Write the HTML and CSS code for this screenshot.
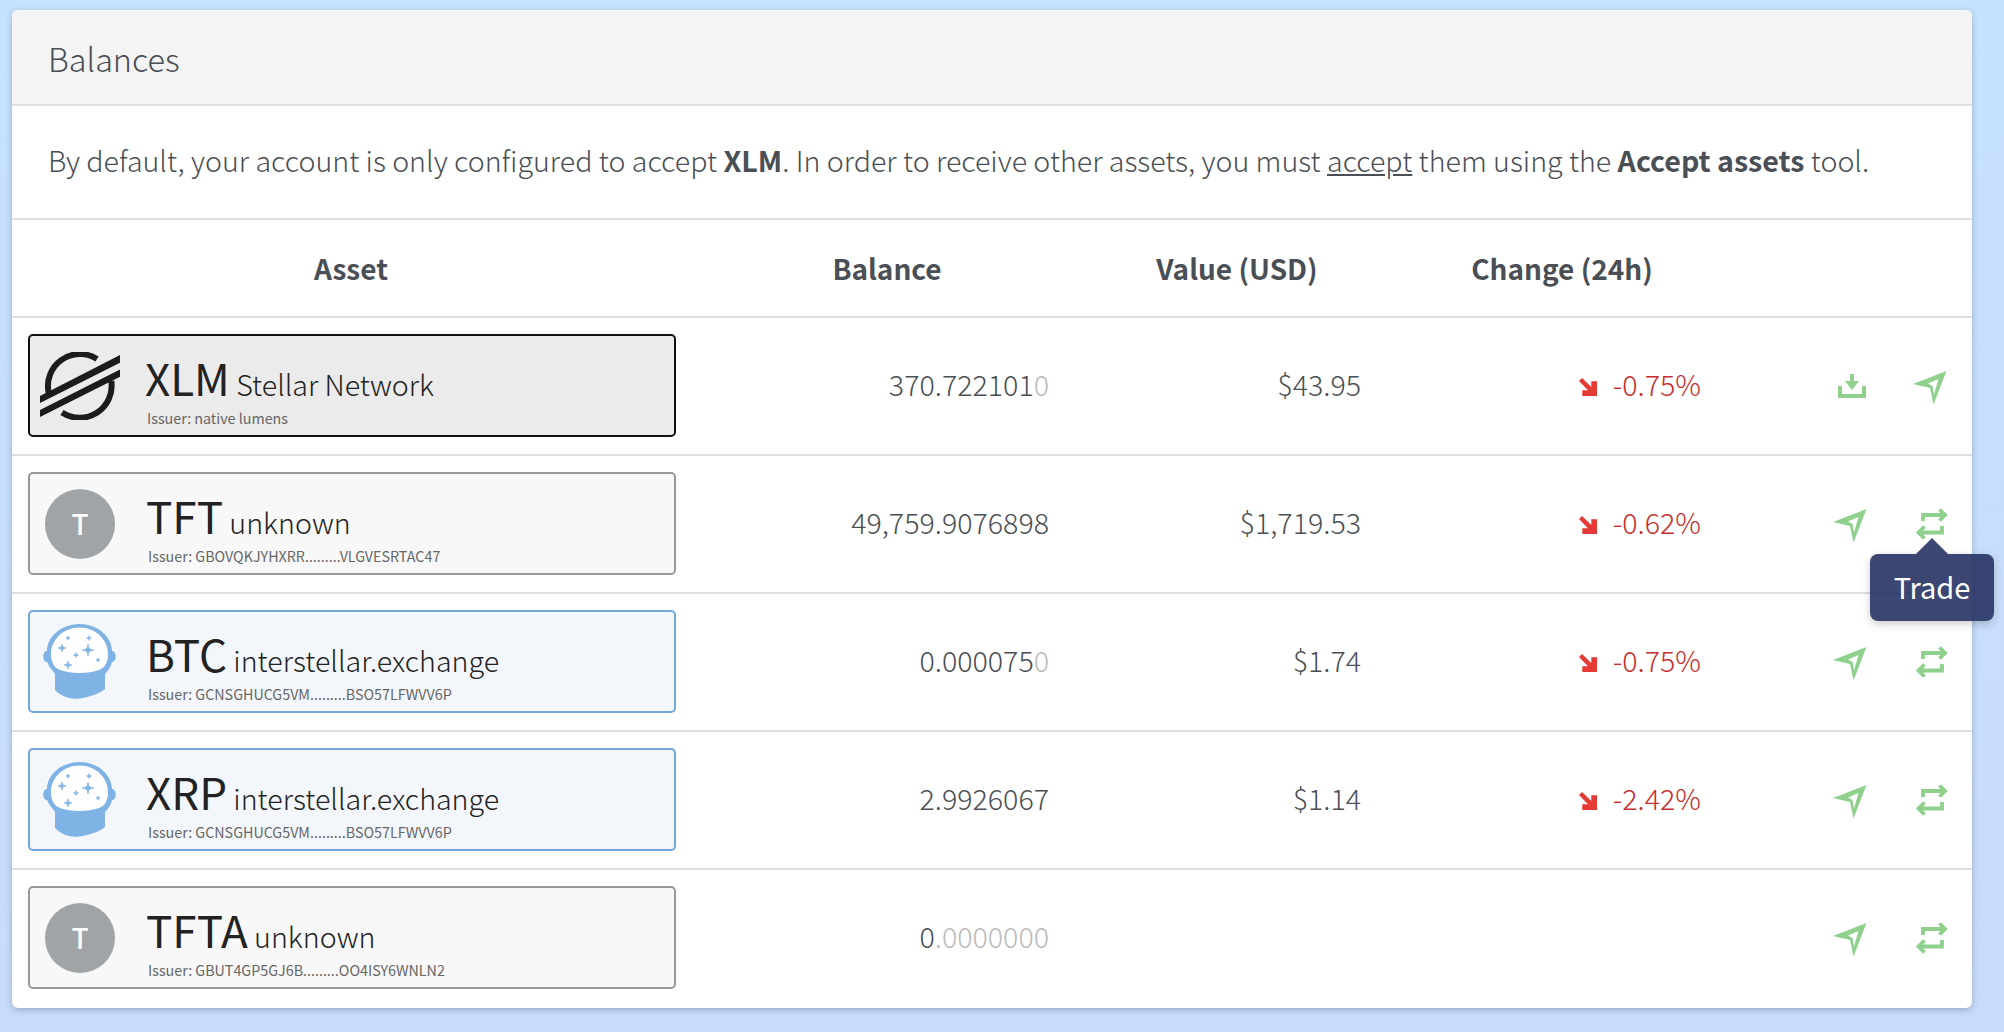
FILE: index.html
```html
<!DOCTYPE html>
<html lang="en">
<head>
    <meta charset="UTF-8">
    <title>Balances</title>
    <link rel="stylesheet" href="styles.css">
</head>
<body>
<svg class="defs" width="0" height="0">
    <symbol id="i-send" viewBox="0 0 34 34">
        <path fill-rule="evenodd" d="M33.500 0L20.500 33.500L17 17L0 13ZM25.500 8L15 12.500L19.500 15L21 23.500Z"/>
    </symbol>
    <symbol id="i-trade" viewBox="0 0 32 32">
        <path class="line" d="M7 13V7H28M23.500 1.500L29 7L23.500 12.500M26 18V24.500H4M8.500 18.500L2.500 24.500L8.500 30.500"/>
    </symbol>
    <symbol id="i-down" viewBox="0 0 28 24">
        <path d="M12 0h4v7h5l-7 9l-7-9h5zM0 12h4v8h20v-8h4v12H0z"/>
    </symbol>
    <symbol id="i-head" viewBox="0 0 73 75">
        <path fill="#7fb2e5" d="M36.500 0C17 0 4 14 4 27C-1 27 -1 38 4 38C6 43 10 47 12 50V66C20 74 30 76 40 74C48 72 56 70 62 65V50C65 47 68 43 69 38C74 38 74 27 69 27C69 14 56 0 36.500 0Z"/>
        <path fill="#fff" d="M36.500 3.500C20 3.500 8 16 8 30C8 38 11 44 17 46C28 50 45 50 56 46C62 44 65 38 65 30C65 16 53 3.500 36.500 3.500Z"/>
        <g fill="#7fb2e5" stroke="#7fb2e5" stroke-width="0.700">
            <path d="M25 12Q25 14 27 14Q25 14 25 16Q25 14 23 14Q25 14 25 12Z"/>
            <path d="M46 11.500Q46 14 48.500 14Q46 14 46 16.500Q46 14 43.500 14Q46 14 46 11.500Z"/>
            <path d="M19 20Q19 24 23 24Q19 24 19 28Q19 24 15 24Q19 24 19 20Z"/>
            <path d="M45 20Q45 26 51 26Q45 26 45 32Q45 26 39 26Q45 26 45 20Z"/>
            <path d="M33 28.500Q33 31 35.500 31Q33 31 33 33.500Q33 31 30.500 31Q33 31 33 28.500Z"/>
            <path d="M55 34Q55 36 57 36Q55 36 55 38Q55 36 53 36Q55 36 55 34Z"/>
            <path d="M25 37Q25 41 29 41Q25 41 25 45Q25 41 21 41Q25 41 25 37Z"/>
        </g>
    </symbol>
</svg>

<div class="card">
    <div class="card-title">Balances</div>
    <p class="intro">By default, your account is only configured to accept <b>XLM</b>. In order to receive other assets, you must <u>accept</u> them using the <b>Accept assets</b> tool.</p>

    <div class="row head">
        <div>Asset</div>
        <div>Balance</div>
        <div>Value (USD)</div>
        <div>Change (24h)</div>
        <div></div>
    </div>

    <div class="row">
        <div class="asset native">
            <svg class="logo" viewBox="0 0 80 68">
                <path class="ring" d="M8.700 41A32 32 0 0 1 57 7M71.300 29A32 32 0 0 1 22 60.500"/>
                <path d="M0 44L80 3V10.700L0 51ZM0 58L80 17.500V24.700L0 65Z"/>
            </svg>
            <div class="asset-text">
                <div class="asset-name"><span class="code">XLM</span> Stellar Network</div>
                <div class="issuer">Issuer: native lumens</div>
            </div>
        </div>
        <div class="num bal">370.722101<i>0</i></div>
        <div class="num val">$43.95</div>
        <div class="num chg"><svg class="down" viewBox="0 0 18 18"><path d="M0 3L3 0L12.300 9V3.300H18V18H3.300V12.300H9Z"/></svg>-0.75%</div>
        <div class="acts">
            <span class="act"><svg class="i-down"><use href="#i-down"/></svg></span>
            <span class="act"><svg class="i-send"><use href="#i-send"/></svg></span>
        </div>
    </div>

    <div class="row">
        <div class="asset unknown">
            <div class="letter">T</div>
            <div class="asset-text">
                <div class="asset-name"><span class="code">TFT</span> unknown</div>
                <div class="issuer">Issuer: GBOVQKJYHXRR.........VLGVESRTAC47</div>
            </div>
        </div>
        <div class="num bal">49,759.9076898</div>
        <div class="num val">$1,719.53</div>
        <div class="num chg"><svg class="down" viewBox="0 0 18 18"><path d="M0 3L3 0L12.300 9V3.300H18V18H3.300V12.300H9Z"/></svg>-0.62%</div>
        <div class="acts">
            <span class="act"><svg class="i-send"><use href="#i-send"/></svg></span>
            <span class="act">
                <svg class="i-trade"><use href="#i-trade"/></svg>
                <span class="tip">Trade</span>
            </span>
        </div>
    </div>

    <div class="row">
        <div class="asset verified">
            <svg class="head-logo"><use href="#i-head"/></svg>
            <div class="asset-text">
                <div class="asset-name"><span class="code">BTC</span> interstellar.exchange</div>
                <div class="issuer">Issuer: GCNSGHUCG5VM.........BSO57LFWVV6P</div>
            </div>
        </div>
        <div class="num bal">0.000075<i>0</i></div>
        <div class="num val">$1.74</div>
        <div class="num chg"><svg class="down" viewBox="0 0 18 18"><path d="M0 3L3 0L12.300 9V3.300H18V18H3.300V12.300H9Z"/></svg>-0.75%</div>
        <div class="acts">
            <span class="act"><svg class="i-send"><use href="#i-send"/></svg></span>
            <span class="act"><svg class="i-trade"><use href="#i-trade"/></svg></span>
        </div>
    </div>

    <div class="row">
        <div class="asset verified">
            <svg class="head-logo"><use href="#i-head"/></svg>
            <div class="asset-text">
                <div class="asset-name"><span class="code">XRP</span> interstellar.exchange</div>
                <div class="issuer">Issuer: GCNSGHUCG5VM.........BSO57LFWVV6P</div>
            </div>
        </div>
        <div class="num bal">2.9926067</div>
        <div class="num val">$1.14</div>
        <div class="num chg"><svg class="down" viewBox="0 0 18 18"><path d="M0 3L3 0L12.300 9V3.300H18V18H3.300V12.300H9Z"/></svg>-2.42%</div>
        <div class="acts">
            <span class="act"><svg class="i-send"><use href="#i-send"/></svg></span>
            <span class="act"><svg class="i-trade"><use href="#i-trade"/></svg></span>
        </div>
    </div>

    <div class="row">
        <div class="asset unknown">
            <div class="letter">T</div>
            <div class="asset-text">
                <div class="asset-name"><span class="code">TFTA</span> unknown</div>
                <div class="issuer">Issuer: GBUT4GP5GJ6B.........OO4ISY6WNLN2</div>
            </div>
        </div>
        <div class="num bal">0<i>.0000000</i></div>
        <div class="num val"></div>
        <div class="num chg"></div>
        <div class="acts">
            <span class="act"><svg class="i-send"><use href="#i-send"/></svg></span>
            <span class="act"><svg class="i-trade"><use href="#i-trade"/></svg></span>
        </div>
    </div>
</div>
</body>
</html>
```
FILE: styles.css
```css
body {
    margin: 0;
    height: 1032px;
    overflow: hidden;
    padding: 10px 32px 0 12px;
    box-sizing: border-box;
    background: linear-gradient(#c6e2fd, #c9dbf9);
    font-family: "Noto Sans CJK SC", "Source Sans Pro", sans-serif;
    font-weight: 300;
    color: #4a4f55;
}

.defs {
    position: absolute;
}

.card {
    background-color: white;
    border-radius: 6px;
    height: 998px;
    box-shadow: 0 2px 6px rgba(60, 80, 120, 0.35);
}

.card-title {
    height: 94px;
    line-height: 95px;
    padding-left: 36px;
    font-size: 32.400px;
    background-color: #f4f4f4;
    border-radius: 6px 6px 0 0;
    border-bottom: 2px solid #e0e0e0;
}

.intro {
    margin: 0;
    height: 112px;
    line-height: 108px;
    padding-left: 36px;
    font-size: 28.600px;
    white-space: nowrap;
    border-bottom: 2px solid #e0e0e0;
}

.intro b {
    font-weight: 700;
}

.row {
    display: grid;
    grid-template-columns: 678px 394px 306px 344px 238px;
    height: 136px;
    border-bottom: 2px solid #e0e0e0;
    align-items: center;
}

.row:last-child {
    border-bottom: none;
}

.head {
    height: 96px;
    line-height: 90px;
    text-align: center;
    font-size: 28px;
    font-weight: 700;
}

.asset {
    margin: 0 0 1px 16px;
    width: 648px;
    height: 103px;
    box-sizing: border-box;
    border: 2px solid #999;
    border-radius: 5px;
    background-color: #f8f8f8;
    display: flex;
    align-items: center;
    color: #222;
}

.asset.native {
    border-color: #111;
    background-color: #ebebeb;
}

.asset.verified {
    border-color: #72a6de;
    background-color: #f3f7fc;
}

.logo {
    width: 80px;
    height: 68px;
    margin: 0 25px 0 10px;
    flex: none;
    fill: #1c1c1c;
}

.logo .ring {
    fill: none;
    stroke: #1c1c1c;
    stroke-width: 6;
}

.head-logo {
    width: 73px;
    height: 75px;
    margin: 0 30px 0 13px;
    flex: none;
}

.letter {
    width: 70px;
    height: 70px;
    border-radius: 50%;
    background-color: #a0a4a6;
    color: white;
    font-size: 28px;
    font-weight: 500;
    text-align: center;
    line-height: 68px;
    margin: 0 31px 0 15px;
    flex: none;
}

.asset-text {
    padding-top: 9px;
}

.asset-name {
    font-size: 28.600px;
    line-height: 48px;
    white-space: nowrap;
}

.code {
    font-size: 44px;
    font-weight: 400;
}

.issuer {
    font-size: 14.300px;
    line-height: 20px;
    margin-left: 2px;
    font-weight: 400;
    color: #666;
}

.num {
    font-size: 28.600px;
    line-height: 40px;
    padding-bottom: 4px;
    text-align: right;
    color: #4a4f55;
}

.num i {
    font-style: normal;
    color: #bbb;
}

.bal {
    padding-right: 35px;
}

.val {
    padding-right: 29px;
}

.chg {
    padding-right: 33px;
    color: #c62f2f;
}

.down {
    width: 18px;
    height: 18px;
    margin-right: 16px;
    fill: #e53935;
    vertical-align: 0;
}

.acts {
    display: flex;
    justify-content: flex-end;
}

.act {
    width: 80px;
    display: flex;
    justify-content: center;
    align-items: center;
    position: relative;
    fill: #8fd08d;
}

.i-send {
    width: 34px;
    height: 34px;
    margin: 4px 4px 0 0;
}

.i-trade {
    width: 32px;
    height: 32px;
}

.i-down {
    width: 28px;
    height: 24px;
}

.line {
    fill: none;
    stroke: #8fd08d;
    stroke-width: 3.800;
}

.tip {
    position: absolute;
    top: 49px;
    left: -22px;
    width: 124px;
    height: 67px;
    line-height: 64px;
    text-align: center;
    font-size: 29px;
    font-weight: 400;
    color: white;
    background-color: rgba(38, 50, 100, 0.9);
    border-radius: 8px;
    box-shadow: 0 3px 8px rgba(0, 0, 0, 0.2);
}

.tip::before {
    content: "";
    position: absolute;
    top: -16px;
    left: 46px;
    border: 16px solid transparent;
    border-top: none;
    border-bottom-color: rgba(38, 50, 100, 0.9);
}
```
